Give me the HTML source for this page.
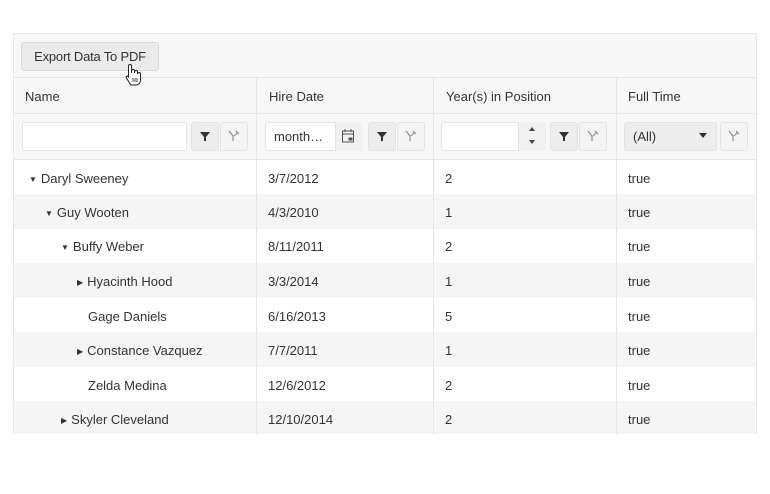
<!DOCTYPE html>
<html><head><meta charset="utf-8"><style>
body{margin:0;width:770px;height:494px;background:#fff;font-family:"Liberation Sans",Arial,sans-serif;font-size:13px;color:#333;position:relative;overflow:hidden}
.a{position:absolute}
.grid{left:13px;top:33px;width:744px;height:401px;border:1px solid #e6e6e6;border-bottom:none;box-sizing:border-box}
.tb{left:13px;top:33px;width:744px;height:45px;background:#f7f7f7;border:1px solid #e6e6e6;box-sizing:border-box}
.btn{left:21px;top:42px;width:138px;height:29px;background:#ebebeb;border:1px solid #d9d9d9;border-radius:3px;box-sizing:border-box;line-height:27px;text-align:center;color:#333;letter-spacing:-0.2px}
.hdr{left:13px;top:78px;width:744px;height:36px;background:#f7f7f7;border-bottom:1px solid #e6e6e6;box-sizing:border-box}
.flt{left:13px;top:114px;width:744px;height:46px;background:#f7f7f7;border-bottom:1px solid #e6e6e6;box-sizing:border-box}
.vl{width:1px;background:#e6e6e6;top:78px;height:356px}
.ht{top:89px}
.inp{background:#fff;border:1px solid #e3e3e3;border-radius:3px;box-sizing:border-box;top:122px;height:29px}
.ib{top:122px;height:29px;width:28px;border:1px solid #e3e3e3;border-radius:3px;box-sizing:border-box;background:#ededed}
.ib.c{background:#f4f4f4;width:28px}
.row{left:14px;width:742px}
.g{background:#f5f5f5}
.tri{display:inline-block;font-size:8px;margin-right:4px;vertical-align:1px}
</style></head><body>
<div class="a tb"></div>
<div class="a btn">Export Data To PDF</div>
<div class="a hdr"></div>
<div class="a flt"></div>
<div class="a g row" style="top:194px;height:35px"></div>
<div class="a g row" style="top:263px;height:35px"></div>
<div class="a g row" style="top:332px;height:35px"></div>
<div class="a g row" style="top:401px;height:33px"></div>
<div class="a grid"></div>
<div class="a vl" style="left:256px"></div>
<div class="a vl" style="left:433px"></div>
<div class="a vl" style="left:616px"></div>
<div class="a ht" style="left:25px">Name</div>
<div class="a ht" style="left:269px">Hire Date</div>
<div class="a ht" style="left:446px">Year(s) in Position</div>
<div class="a ht" style="left:628px">Full Time</div>

<div class="a inp" style="left:22px;width:165px"></div>
<div class="a ib" style="left:191px"></div><div class="a ib c" style="left:220px"></div>
<div class="a inp" style="left:265px;width:97px"></div>
<div class="a" style="left:335px;top:122px;width:27px;height:29px;background:#f1f1f1;border-left:1px solid #e3e3e3;box-sizing:border-box"></div>
<div class="a" style="left:274px;top:129px">month…</div>
<div class="a ib" style="left:368px"></div><div class="a ib c" style="left:397px"></div>
<div class="a inp" style="left:441px;width:105px"></div>
<div class="a" style="left:518px;top:122px;width:28px;height:29px;background:#f1f1f1;border-left:1px solid #e3e3e3;box-sizing:border-box"></div>
<div class="a ib" style="left:550px"></div><div class="a ib c" style="left:579px"></div>
<div class="a ib" style="left:624px;width:93px;background:#ededed"></div>
<div class="a" style="left:633px;top:129px">(All)</div>
<div class="a ib c" style="left:720px"></div>
<svg class="a" style="left:0;top:0" width="770" height="494">
<g transform="translate(205,136)"><path d="M-5,-4 H5 L1,1 V5 H-1 V1 Z" fill="#333"/></g>
<g transform="translate(382,136)"><path d="M-5,-4 H5 L1,1 V5 H-1 V1 Z" fill="#333"/></g>
<g transform="translate(564,136)"><path d="M-5,-4 H5 L1,1 V5 H-1 V1 Z" fill="#333"/></g>
<g stroke="#888" stroke-width="1.1" fill="none">
<g transform="translate(234,136)"><path d="M-5,-5 L-1,0 V5 M4,-4 L0,0 M2,-5 L5,-2"/></g>
<g transform="translate(411,136)"><path d="M-5,-5 L-1,0 V5 M4,-4 L0,0 M2,-5 L5,-2"/></g>
<g transform="translate(593,136)"><path d="M-5,-5 L-1,0 V5 M4,-4 L0,0 M2,-5 L5,-2"/></g>
<g transform="translate(734,136)"><path d="M-5,-5 L-1,0 V5 M4,-4 L0,0 M2,-5 L5,-2"/></g>
</g>
<g transform="translate(348,136)" fill="none" stroke="#555" stroke-width="1"><rect x="-5.5" y="-5" width="11" height="11"/><path d="M-5.5,-2 H5.5 M-3,-7 V-4 M3,-7 V-4"/><rect x="1" y="2" width="3" height="2" fill="#555"/></g>
<path d="M529,131 L532,127 L535,131 Z M529,140 L532,144 L535,140 Z" fill="#444"/>
<path d="M699,133 L707,133 L703,138 Z" fill="#333"/>
<path d="M128.5,77 V66 a1.5,1.5 0 0 1 3,0 V73 V71 a1.5,1.5 0 0 1 3,0 V73 V72 a1.5,1.5 0 0 1 3,0 V74 a1.5,1.5 0 0 1 3,0 V80 q0,4 -4,5 h-4 q-2,0 -3,-2 l-3,-5 q-1,-2 1,-2 z" fill="#fff" stroke="#222" stroke-width="1"/>
<path d="M133,78 v4 M135,78 v4 M137,78 v4" stroke="#222" stroke-width="0.8"/>
</svg>

<div class="a" style="left:29px;top:171px"><span class="tri">▼</span>Daryl Sweeney</div>
<div class="a" style="left:45px;top:205px"><span class="tri">▼</span>Guy Wooten</div>
<div class="a" style="left:61px;top:239px"><span class="tri">▼</span>Buffy Weber</div>
<div class="a" style="left:77px;top:274px"><span class="tri">▶</span>Hyacinth Hood</div>
<div class="a" style="left:88px;top:309px">Gage Daniels</div>
<div class="a" style="left:77px;top:343px"><span class="tri">▶</span>Constance Vazquez</div>
<div class="a" style="left:88px;top:378px">Zelda Medina</div>
<div class="a" style="left:61px;top:412px"><span class="tri">▶</span>Skyler Cleveland</div>

<div class="a" style="left:268px;top:171px">3/7/2012</div>
<div class="a" style="left:268px;top:205px">4/3/2010</div>
<div class="a" style="left:268px;top:239px">8/11/2011</div>
<div class="a" style="left:268px;top:274px">3/3/2014</div>
<div class="a" style="left:268px;top:309px">6/16/2013</div>
<div class="a" style="left:268px;top:343px">7/7/2011</div>
<div class="a" style="left:268px;top:378px">12/6/2012</div>
<div class="a" style="left:268px;top:412px">12/10/2014</div>

<div class="a" style="left:445px;top:171px">2</div>
<div class="a" style="left:445px;top:205px">1</div>
<div class="a" style="left:445px;top:239px">2</div>
<div class="a" style="left:445px;top:274px">1</div>
<div class="a" style="left:445px;top:309px">5</div>
<div class="a" style="left:445px;top:343px">1</div>
<div class="a" style="left:445px;top:378px">2</div>
<div class="a" style="left:445px;top:412px">2</div>

<div class="a" style="left:628px;top:171px">true</div>
<div class="a" style="left:628px;top:205px">true</div>
<div class="a" style="left:628px;top:239px">true</div>
<div class="a" style="left:628px;top:274px">true</div>
<div class="a" style="left:628px;top:309px">true</div>
<div class="a" style="left:628px;top:343px">true</div>
<div class="a" style="left:628px;top:378px">true</div>
<div class="a" style="left:628px;top:412px">true</div>
</body></html>
